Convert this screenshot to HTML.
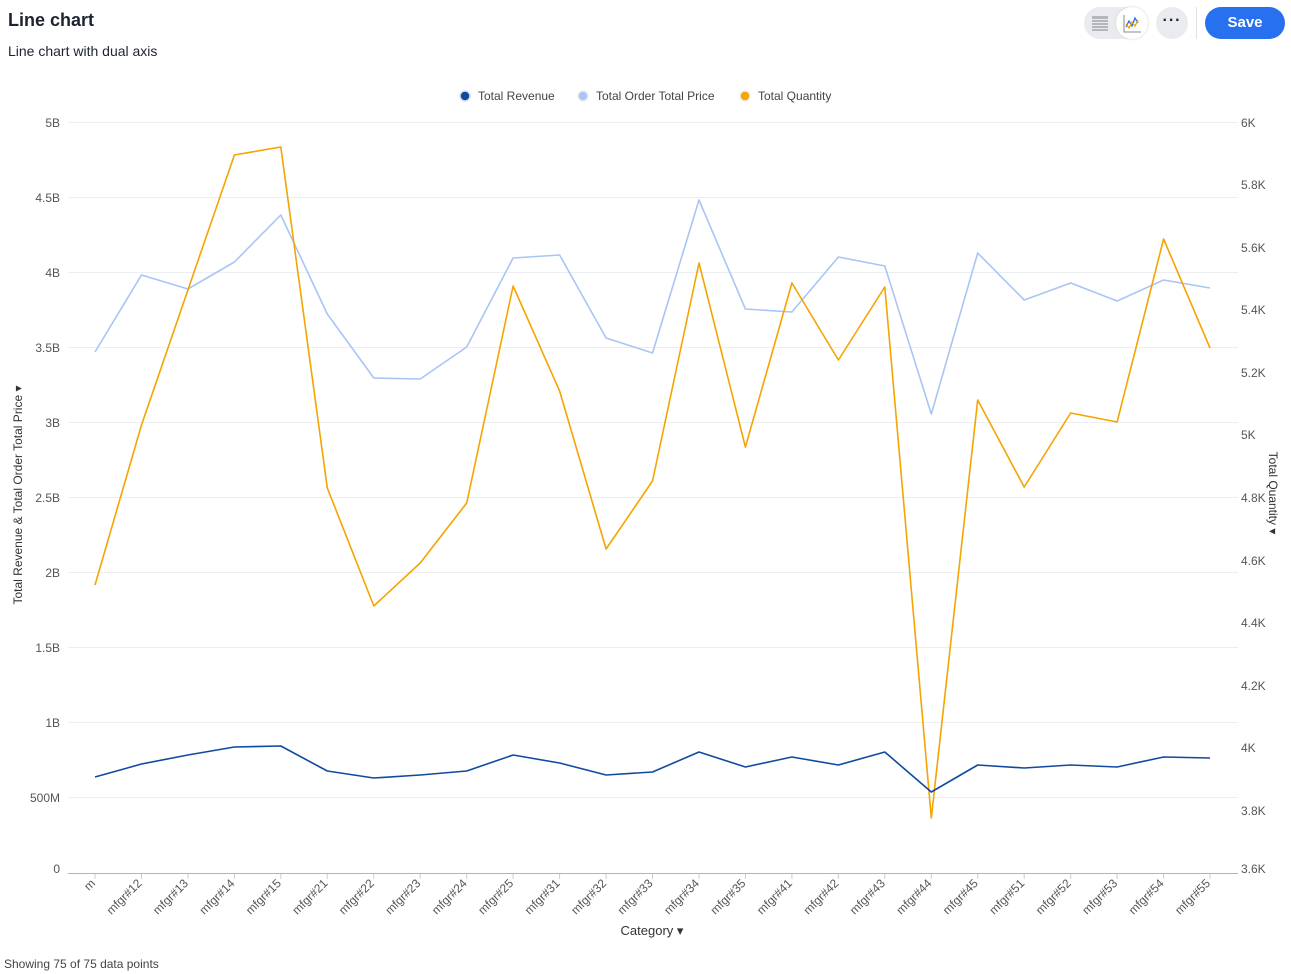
<!DOCTYPE html>
<html><head><meta charset="utf-8"><style>
body{margin:0;width:1291px;height:974px;background:#fff;font-family:"Liberation Sans",sans-serif;position:relative;overflow:hidden;color:#1d232f}
.t{position:absolute;left:8px;top:10px;font-size:18px;font-weight:bold}
.s{position:absolute;left:8px;top:43px;font-size:14px}
.f{position:absolute;left:4px;top:957px;font-size:12px;color:#444}
.tg{position:absolute;left:1084px;top:7px;width:64px;height:32px;border-radius:16px;background:#eaebef}
.tg .on{position:absolute;left:32px;top:0;width:32px;height:32px;border-radius:16px;background:#fff;box-shadow:0 0 2px #ccc}
.more{position:absolute;left:1156px;top:7px;width:32px;height:32px;border-radius:16px;background:#eaebef;text-align:center;line-height:28px;font-size:16px;font-weight:bold;letter-spacing:1px}
.sep{position:absolute;left:1196px;top:7px;width:1px;height:32px;background:#e0e0e0}
.save{position:absolute;left:1205px;top:7px;width:80px;height:32px;border-radius:16px;background:#2770ef;color:#fff;text-align:center;line-height:31px;font-size:15px;font-weight:bold}
svg{position:absolute;left:0;top:0}
</style></head><body>
<div class="t">Line chart</div>
<div class="s">Line chart with dual axis</div>
<div class="tg"><svg width="32" height="32" style="left:0"><g fill="#b4b6bb"><rect x="8" y="9" width="16" height="3"/><rect x="8" y="13" width="16" height="2"/><rect x="8" y="16" width="16" height="2"/><rect x="8" y="19" width="16" height="2"/><rect x="8" y="22" width="16" height="2"/></g></svg><div class="on"><svg width="32" height="32"><path d="M8 8V25H25" stroke="#888" fill="none"/><path d="M10 20L13 14L16 19L19 11L22 16" stroke="#2770ef" fill="none" stroke-width="1.3"/><path d="M10 17L13 21L16 15L19 19L22 13" stroke="#f5a400" fill="none" stroke-width="1.3"/></svg></div></div>
<div class="more">···</div>
<div class="sep"></div>
<div class="save">Save</div>
<svg width="1291" height="974" font-family="Liberation Sans, sans-serif" font-size="12" fill="#555">
<g stroke="#eceef1"><line x1="68" x2="1238" y1="122.5" y2="122.5"/><line x1="68" x2="1238" y1="197.5" y2="197.5"/><line x1="68" x2="1238" y1="272.5" y2="272.5"/><line x1="68" x2="1238" y1="347.5" y2="347.5"/><line x1="68" x2="1238" y1="422.5" y2="422.5"/><line x1="68" x2="1238" y1="497.5" y2="497.5"/><line x1="68" x2="1238" y1="572.5" y2="572.5"/><line x1="68" x2="1238" y1="647.5" y2="647.5"/><line x1="68" x2="1238" y1="722.5" y2="722.5"/><line x1="68" x2="1238" y1="797.5" y2="797.5"/></g>
<line x1="68" x2="1238" y1="873.5" y2="873.5" stroke="#b0b4bc"/>
<g stroke="#c8ccd2"><path d="M95 874v5M141.5 874v5M187.9 874v5M234.4 874v5M280.8 874v5M327.3 874v5M373.8 874v5M420.2 874v5M466.7 874v5M513.1 874v5M559.6 874v5M606.1 874v5M652.5 874v5M699 874v5M745.4 874v5M791.9 874v5M838.4 874v5M884.8 874v5M931.3 874v5M977.7 874v5M1024.2 874v5M1070.7 874v5M1117.1 874v5M1163.6 874v5M1210 874v5"/></g>
<g text-anchor="end"><text x="60" y="127">5B</text><text x="60" y="202">4.5B</text><text x="60" y="277">4B</text><text x="60" y="352">3.5B</text><text x="60" y="427">3B</text><text x="60" y="502">2.5B</text><text x="60" y="577">2B</text><text x="60" y="652">1.5B</text><text x="60" y="727">1B</text><text x="60" y="802">500M</text><text x="60" y="873">0</text></g>
<g><text x="1241" y="127">6K</text><text x="1241" y="189">5.8K</text><text x="1241" y="252">5.6K</text><text x="1241" y="314">5.4K</text><text x="1241" y="377">5.2K</text><text x="1241" y="439">5K</text><text x="1241" y="502">4.8K</text><text x="1241" y="565">4.6K</text><text x="1241" y="627">4.4K</text><text x="1241" y="690">4.2K</text><text x="1241" y="752">4K</text><text x="1241" y="815">3.8K</text><text x="1241" y="873">3.6K</text></g>
<text transform="translate(22,495) rotate(-90)" text-anchor="middle" fill="#333">Total Revenue &amp; Total Order Total Price ▾</text>
<text transform="translate(1269,493) rotate(90)" text-anchor="middle" fill="#333">Total Quantity ▾</text>
<text x="652" y="935" text-anchor="middle" fill="#333" font-size="13">Category ▾</text>
<g fill="#555" text-anchor="end">
<text transform="translate(96,884) rotate(-45)">m</text>
<text transform="translate(142.5,884) rotate(-45)">mfgr#12</text>
<text transform="translate(188.9,884) rotate(-45)">mfgr#13</text>
<text transform="translate(235.4,884) rotate(-45)">mfgr#14</text>
<text transform="translate(281.8,884) rotate(-45)">mfgr#15</text>
<text transform="translate(328.3,884) rotate(-45)">mfgr#21</text>
<text transform="translate(374.8,884) rotate(-45)">mfgr#22</text>
<text transform="translate(421.2,884) rotate(-45)">mfgr#23</text>
<text transform="translate(467.7,884) rotate(-45)">mfgr#24</text>
<text transform="translate(514.1,884) rotate(-45)">mfgr#25</text>
<text transform="translate(560.6,884) rotate(-45)">mfgr#31</text>
<text transform="translate(607.1,884) rotate(-45)">mfgr#32</text>
<text transform="translate(653.5,884) rotate(-45)">mfgr#33</text>
<text transform="translate(700,884) rotate(-45)">mfgr#34</text>
<text transform="translate(746.4,884) rotate(-45)">mfgr#35</text>
<text transform="translate(792.9,884) rotate(-45)">mfgr#41</text>
<text transform="translate(839.4,884) rotate(-45)">mfgr#42</text>
<text transform="translate(885.8,884) rotate(-45)">mfgr#43</text>
<text transform="translate(932.3,884) rotate(-45)">mfgr#44</text>
<text transform="translate(978.7,884) rotate(-45)">mfgr#45</text>
<text transform="translate(1025.2,884) rotate(-45)">mfgr#51</text>
<text transform="translate(1071.7,884) rotate(-45)">mfgr#52</text>
<text transform="translate(1118.1,884) rotate(-45)">mfgr#53</text>
<text transform="translate(1164.6,884) rotate(-45)">mfgr#54</text>
<text transform="translate(1211,884) rotate(-45)">mfgr#55</text>
</g>
<g fill="none" stroke-width="1.6" stroke-linejoin="round">
<polyline stroke="#a9c5f5" points="95,352 141.5,275 187.9,289 234.4,262 280.8,215 327.3,314 373.8,378 420.2,379 466.7,347 513.1,258 559.6,255 606.1,338 652.5,353 699,200 745.4,309 791.9,312 838.4,257 884.8,266 931.3,414 977.7,253 1024.2,300 1070.7,283 1117.1,301 1163.6,280 1210,288"/>
<polyline stroke="#f5a400" points="95,585 141.5,425 187.9,290 234.4,155 280.8,147 327.3,488 373.8,606 420.2,563 466.7,503 513.1,286 559.6,391 606.1,549 652.5,481 699,263 745.4,447 791.9,283 838.4,360 884.8,287 931.3,818 977.7,400 1024.2,487 1070.7,413 1117.1,422 1163.6,239 1210,348"/>
<polyline stroke="#0f4aa0" points="95,777 141.5,764 187.9,755 234.4,747 280.8,746 327.3,771 373.8,778 420.2,775 466.7,771 513.1,755 559.6,763 606.1,775 652.5,772 699,752 745.4,767 791.9,757 838.4,765 884.8,752 931.3,792 977.7,765 1024.2,768 1070.7,765 1117.1,767 1163.6,757 1210,758"/>
</g>
<g font-size="12" fill="#444">
<circle cx="465" cy="96" r="5" fill="#0f4aa0" stroke="#dde" stroke-width="1.5"/><text x="478" y="100">Total Revenue</text>
<circle cx="583" cy="96" r="5" fill="#a9c5f5" stroke="#eee" stroke-width="1.5"/><text x="596" y="100">Total Order Total Price</text>
<circle cx="745" cy="96" r="5" fill="#f5a400" stroke="#eee" stroke-width="1.5"/><text x="758" y="100">Total Quantity</text>
</g>
</svg>
<div class="f">Showing 75 of 75 data points</div>
</body></html>
